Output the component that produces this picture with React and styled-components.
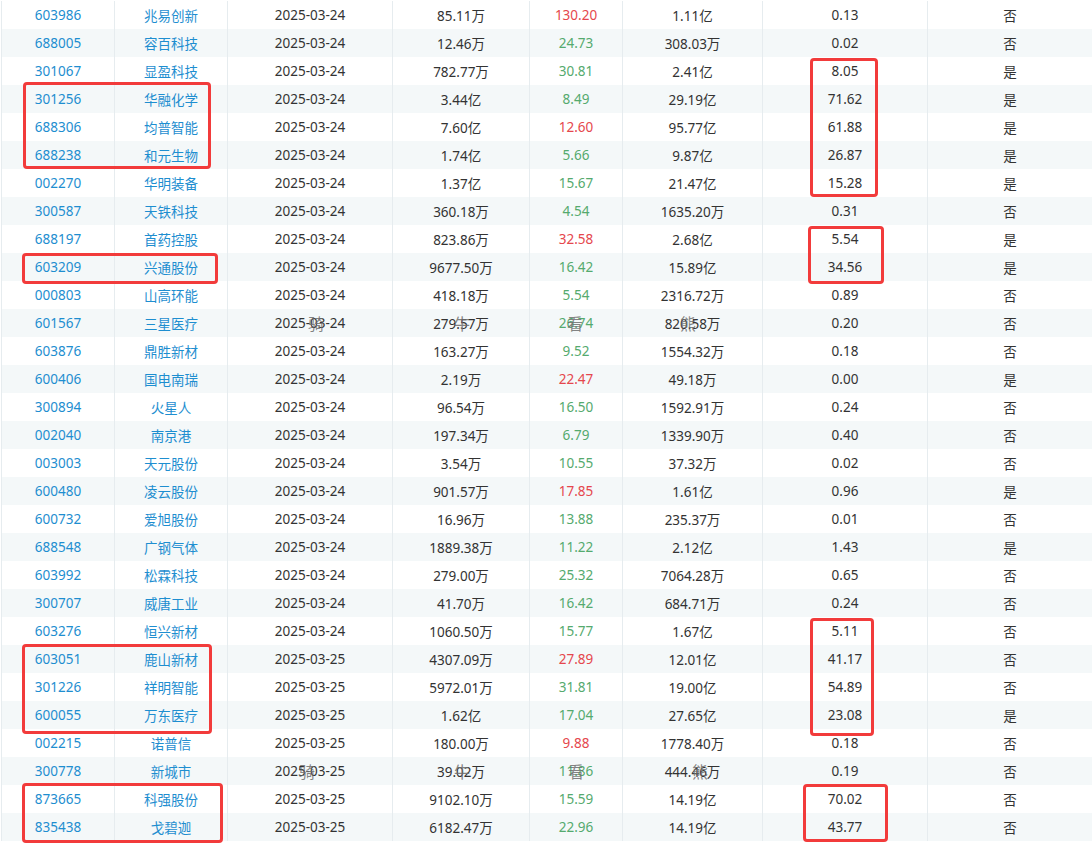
import React from "react";
import styled, { createGlobalStyle } from "styled-components";

const GlobalStyle = createGlobalStyle`
  html, body {
    margin: 0;
    padding: 0;
    background: #fff;
  }
  body {
    font-family: "Noto Sans", "Noto Sans CJK SC", sans-serif;
    overflow: hidden;
  }
`;

const Page = styled.div`
  position: relative;
  width: 1092px;
  height: 850px;
  padding-top: 1px;
  box-sizing: border-box;
`;

const Table = styled.div`
  display: grid;
  grid-template-columns: 113px 113px 165px 137px 93px 140px 165px 165px;
  margin-left: 1px;
`;

const Row = styled.div`
  display: contents;

  & > div {
    background: ${(p) => (p.$striped ? "#f4f8f9" : "#fff")};
  }
`;

const Cell = styled.div`
  height: 28px;
  display: flex;
  align-items: center;
  justify-content: center;
  padding-bottom: 1px;
  box-sizing: border-box;
  border-left: 1px solid #e6ecef;
  font-size: 13.5px;
  color: ${(p) => p.$color || "#333"};
  white-space: nowrap;
`;

const Mark = styled.div`
  position: absolute;
  border: 3px solid #f23b3b;
  border-radius: 4px;
  box-sizing: border-box;
  pointer-events: none;
`;

const Watermark = styled.span`
  position: absolute;
  transform: translate(-50%, -50%);
  font-family: "Noto Sans CJK SC", sans-serif;
  font-size: 16px;
  color: rgba(110, 110, 110, 0.85);
  pointer-events: none;
`;

const BLUE = "#1e8ed0";
const RED = "#e5474d";
const GREEN = "#55aa6e";

const rows = [
  ["603986", "兆易创新", "2025-03-24", "85.11万", "130.20", 1, "1.11亿", "0.13", "否"],
  ["688005", "容百科技", "2025-03-24", "12.46万", "24.73", 0, "308.03万", "0.02", "否"],
  ["301067", "显盈科技", "2025-03-24", "782.77万", "30.81", 0, "2.41亿", "8.05", "是"],
  ["301256", "华融化学", "2025-03-24", "3.44亿", "8.49", 0, "29.19亿", "71.62", "是"],
  ["688306", "均普智能", "2025-03-24", "7.60亿", "12.60", 1, "95.77亿", "61.88", "是"],
  ["688238", "和元生物", "2025-03-24", "1.74亿", "5.66", 0, "9.87亿", "26.87", "是"],
  ["002270", "华明装备", "2025-03-24", "1.37亿", "15.67", 0, "21.47亿", "15.28", "是"],
  ["300587", "天铁科技", "2025-03-24", "360.18万", "4.54", 0, "1635.20万", "0.31", "否"],
  ["688197", "首药控股", "2025-03-24", "823.86万", "32.58", 1, "2.68亿", "5.54", "是"],
  ["603209", "兴通股份", "2025-03-24", "9677.50万", "16.42", 0, "15.89亿", "34.56", "是"],
  ["000803", "山高环能", "2025-03-24", "418.18万", "5.54", 0, "2316.72万", "0.89", "否"],
  ["601567", "三星医疗", "2025-03-24", "279.57万", "26.74", 0, "820.58万", "0.20", "否"],
  ["603876", "鼎胜新材", "2025-03-24", "163.27万", "9.52", 0, "1554.32万", "0.18", "否"],
  ["600406", "国电南瑞", "2025-03-24", "2.19万", "22.47", 1, "49.18万", "0.00", "是"],
  ["300894", "火星人", "2025-03-24", "96.54万", "16.50", 0, "1592.91万", "0.24", "否"],
  ["002040", "南京港", "2025-03-24", "197.34万", "6.79", 0, "1339.90万", "0.40", "否"],
  ["003003", "天元股份", "2025-03-24", "3.54万", "10.55", 0, "37.32万", "0.02", "否"],
  ["600480", "凌云股份", "2025-03-24", "901.57万", "17.85", 1, "1.61亿", "0.96", "是"],
  ["600732", "爱旭股份", "2025-03-24", "16.96万", "13.88", 0, "235.37万", "0.01", "否"],
  ["688548", "广钢气体", "2025-03-24", "1889.38万", "11.22", 0, "2.12亿", "1.43", "是"],
  ["603992", "松霖科技", "2025-03-24", "279.00万", "25.32", 0, "7064.28万", "0.65", "否"],
  ["300707", "威唐工业", "2025-03-24", "41.70万", "16.42", 0, "684.71万", "0.24", "否"],
  ["603276", "恒兴新材", "2025-03-24", "1060.50万", "15.77", 0, "1.67亿", "5.11", "否"],
  ["603051", "鹿山新材", "2025-03-25", "4307.09万", "27.89", 1, "12.01亿", "41.17", "否"],
  ["301226", "祥明智能", "2025-03-25", "5972.01万", "31.81", 0, "19.00亿", "54.89", "否"],
  ["600055", "万东医疗", "2025-03-25", "1.62亿", "17.04", 0, "27.65亿", "23.08", "是"],
  ["002215", "诺普信", "2025-03-25", "180.00万", "9.88", 1, "1778.40万", "0.18", "否"],
  ["300778", "新城市", "2025-03-25", "39.02万", "11.86", 0, "444.46万", "0.19", "否"],
  ["873665", "科强股份", "2025-03-25", "9102.10万", "15.59", 0, "14.19亿", "70.02", "否"],
  ["835438", "戈碧迦", "2025-03-25", "6182.47万", "22.96", 0, "14.19亿", "43.77", "否"],
];

// annotation boxes drawn over the table
const marks = [
  { left: 23, top: 82, width: 188, height: 87 },
  { left: 810, top: 58, width: 68, height: 139 },
  { left: 808, top: 226, width: 76, height: 58 },
  { left: 22, top: 253, width: 196, height: 31 },
  { left: 810, top: 618, width: 64, height: 118 },
  { left: 22, top: 644, width: 190, height: 90 },
  { left: 22, top: 783, width: 201, height: 60 },
  { left: 803, top: 784, width: 85, height: 58 },
];

const watermarks = [
  { ch: "骑", x: 316, y: 323 },
  { ch: "牛", x: 462, y: 323 },
  { ch: "看", x: 575, y: 323 },
  { ch: "熊", x: 688, y: 323 },
  { ch: "骑", x: 307, y: 771 },
  { ch: "牛", x: 462, y: 771 },
  { ch: "看", x: 576, y: 771 },
  { ch: "熊", x: 700, y: 771 },
];

function App() {
  return (
    <Page>
      <GlobalStyle />
      <Table>
        {rows.map((r, i) => (
          <Row key={r[0] + i} $striped={i % 2 === 1}>
            <Cell $color={BLUE}>{r[0]}</Cell>
            <Cell $color={BLUE}>{r[1]}</Cell>
            <Cell>{r[2]}</Cell>
            <Cell>{r[3]}</Cell>
            <Cell $color={r[5] ? RED : GREEN}>{r[4]}</Cell>
            <Cell>{r[6]}</Cell>
            <Cell>{r[7]}</Cell>
            <Cell>{r[8]}</Cell>
          </Row>
        ))}
      </Table>
      {watermarks.map((w, i) => (
        <Watermark key={i} style={{ left: w.x, top: w.y }}>
          {w.ch}
        </Watermark>
      ))}
      {marks.map((m, i) => (
        <Mark key={i} style={m} />
      ))}
    </Page>
  );
}

export default App;
